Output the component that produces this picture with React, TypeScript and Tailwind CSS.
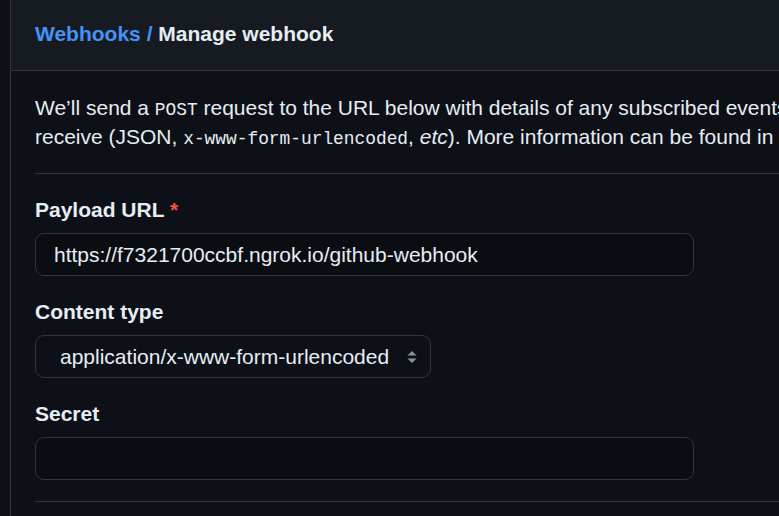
import React from "react";

function SelectArrows() {
  return (
    <svg width="12" height="14" viewBox="0 0 12 14" className="shrink-0">
      <path d="M6 1 L10.5 5.5 L1.5 5.5 Z" fill="#8b949e" />
      <path d="M6 13 L10.5 8.5 L1.5 8.5 Z" fill="#8b949e" />
    </svg>
  );
}

export default function App() {
  const mono = { fontFamily: '"Liberation Mono", "DejaVu Sans Mono", monospace' };
  return (
    <div
      className="w-[779px] h-[516px] overflow-hidden bg-[#0d1117] flex text-[#e6edf3]"
      style={{ fontFamily: '"Liberation Sans", Arial, sans-serif' }}
    >
      <div className="w-[10px] shrink-0 bg-[#0d1117]" />
      <div className="w-[1200px] shrink-0 border-l border-[#30363d] bg-[#0d1117] flex flex-col">
        <div className="h-[71px] shrink-0 bg-[#161b22] border-b border-[#30363d] flex items-center pl-[24px] pb-[2px]">
          <h2 className="text-[21px] font-bold leading-[30px] whitespace-nowrap">
            <a className="text-[#4493f8]">Webhooks</a>
            <span className="text-[#4493f8]"> / </span>
            <span>Manage webhook</span>
          </h2>
        </div>
        <div className="pl-[24px] pt-[22px]">
          <p className="text-[21px] leading-[29px] whitespace-nowrap">
            We’ll send a <code className="text-[17.85px] leading-none" style={mono}>POST</code> request to the URL below with details of any subscribed events you’d like to
            <br />
            receive (JSON, <code className="text-[17.85px] leading-none" style={mono}>x-www-form-urlencoded</code>, <em>etc</em>). More information can be found in our developer documentation.
          </p>
          <div className="mt-[22px] border-t border-[#30363d]" />
          <div className="pt-[21px]">
            <label className="block text-[21px] font-bold leading-[30px] mb-[8px]">
              Payload URL <span className="text-[#f85149]">*</span>
            </label>
            <div className="w-[659px] h-[43px] rounded-[9px] border border-[#30363d] bg-[#0a0d12] flex items-center pl-[18px] text-[21px] whitespace-nowrap">
              https://f7321700ccbf.ngrok.io/github-webhook
            </div>
          </div>
          <div className="pt-[21px]">
            <label className="block text-[21px] font-bold leading-[30px] mb-[8px]">Content type</label>
            <div className="w-[396px] h-[43px] rounded-[9px] border border-[#30363d] bg-[#0d1117] flex items-center pl-[24px] pr-[12px] text-[21px] whitespace-nowrap">
              <span className="flex-1">application/x-www-form-urlencoded</span>
              <SelectArrows />
            </div>
          </div>
          <div className="pt-[21px]">
            <label className="block text-[21px] font-bold leading-[30px] mb-[8px]">Secret</label>
            <div className="w-[659px] h-[43px] rounded-[9px] border border-[#30363d] bg-[#0a0d12]" />
          </div>
          <div className="mt-[21px] border-t border-[#30363d]" />
        </div>
      </div>
    </div>
  );
}
